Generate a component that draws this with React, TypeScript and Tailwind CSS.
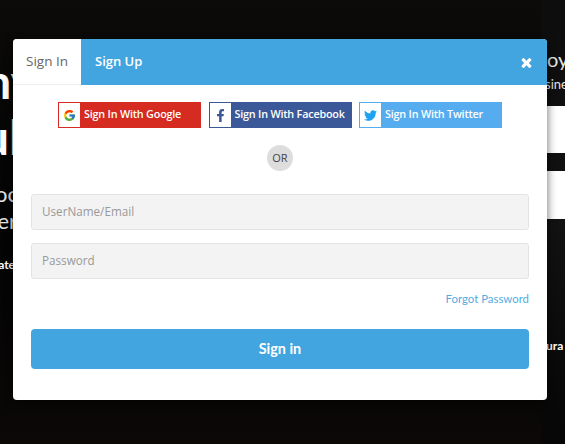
import React from "react";
import { FcGoogle } from "react-icons/fc";
import { FaFacebookF, FaTwitter } from "react-icons/fa";

function CloseIcon() {
  return (
    <svg viewBox="0 0 1792 1792" className="size-[15px]" fill="currentColor">
      <path d="M1490 1322q0 40-28 68l-136 136q-28 28-68 28t-68-28l-294-294-294 294q-28 28-68 28t-68-28l-136-136q-28-28-28-68t28-68l294-294-294-294q-28-28-28-68t28-68l136-136q28-28 68-28t68 28l294 294 294-294q28-28 68-28t68 28l136 136q28 28 28 68t-28 68l-294 294 294 294q28 28 28 68z" />
    </svg>
  );
}

function SocialButton({ color, icon, label }: { color: string; icon: React.ReactNode; label: string }) {
  return (
    <button className={`flex h-[26px] w-[143px] items-center border ${color}`}>
      <span className="flex h-full w-[21px] shrink-0 items-center justify-center bg-white">{icon}</span>
      <span className="whitespace-nowrap pb-px pl-[4px] text-[10.8px] leading-none font-semibold tracking-[-0.2px] text-white">{label}</span>
    </button>
  );
}

function Backdrop() {
  return (
    <div className="flex h-full justify-between bg-linear-to-b from-[#0c0b0a] via-[#040404] to-[#0b0807] text-[#e4e4e4]">
      <div className="flex w-[20px] flex-col items-end pt-[53px] font-['Lato',sans-serif]">
        <div className="-mr-[16px] text-[48px] leading-[56px] font-bold text-white">ny</div>
        <div className="-mr-[1px] text-[48px] leading-[56px] font-bold text-white">ul</div>
        <div className="mt-[15px] mr-[2px] text-[22px] leading-[27px]">oc</div>
        <div className="mr-[3px] text-[22px] leading-[27px]">er</div>
        <div className="mt-[20px] mr-[5px] text-[12px] leading-[22px] font-bold text-white">ate</div>
      </div>
      <div className="flex w-[24px] flex-col bg-linear-to-b from-[#0d0d0d] via-[#121212] to-[#060606] pt-[44px] font-['Lato',sans-serif]">
        <div className="pl-[6px] text-[20px] leading-[30px]">oy</div>
        <div className="pl-[4px] text-[13px] leading-[20px]">sine</div>
        <div className="mt-[12px] h-[47px] bg-white" />
        <div className="mt-[18px] h-[48px] bg-white" />
        <div className="mt-[117px] pl-[5px] text-[12px] leading-[20px] font-bold text-white">ura</div>
      </div>
    </div>
  );
}

export default function App() {
  return (
    <div className="relative h-[444px] w-[565px] overflow-hidden bg-black font-['Open_Sans',sans-serif]">
      <Backdrop />
      <div className="absolute top-[39px] left-[13px] flex h-[361px] w-[534px] flex-col overflow-hidden rounded-[4px] bg-white shadow-[0_3px_10px_rgba(0,0,0,0.6)]">
        <header className="flex h-[46px] shrink-0 items-stretch bg-[#42a5e0] text-[13.5px]">
          <button className="w-[68px] border-b border-[#eeeeee] bg-white text-[#666666]">Sign In</button>
          <button className="px-[14px] text-[13px] font-semibold text-white">Sign Up</button>
          <button className="mr-[13px] ml-auto text-white" aria-label="Close">
            <CloseIcon />
          </button>
        </header>
        <main className="flex flex-col px-[18px] pt-[17px]">
          <div className="flex justify-center gap-[7.5px]">
            <SocialButton color="border-[#d52b20] bg-[#d52b20]" label="Sign In With Google" icon={<FcGoogle className="size-[13px]" />} />
            <SocialButton color="border-[#3b5998] bg-[#3b5998]" label="Sign In With Facebook" icon={<FaFacebookF className="size-[13px] text-[#3b5998]" />} />
            <SocialButton color="border-[#55acee] bg-[#55acee]" label="Sign In With Twitter" icon={<FaTwitter className="size-[13px] text-[#1da1f2]" />} />
          </div>
          <div className="mt-[17px] flex size-[26px] items-center justify-center self-center rounded-full bg-[#dddddd] text-[11px] text-[#444444]">
            OR
          </div>
          <input
            className="mt-[23px] h-[36px] rounded-[3px] border border-[#e3e3e3] bg-[#f3f3f3] px-[10px] pb-[2px] text-[11.7px] placeholder:text-[#999999]"
            placeholder="UserName/Email"
          />
          <input
            className="mt-[13px] h-[36px] rounded-[3px] border border-[#e3e3e3] bg-[#f3f3f3] px-[10px] pb-[2px] text-[11.7px] placeholder:text-[#999999]"
            placeholder="Password"
            type="password"
          />
          <a className="mt-[12px] self-end font-['Lato',sans-serif] text-[11.4px] leading-[16px] text-[#55abdf]">Forgot Password</a>
          <button className="mt-[22px] h-[40px] rounded-[4px] bg-[#42a5e0] font-['Lato',sans-serif] text-[14.4px] font-bold text-white">
            Sign in
          </button>
        </main>
      </div>
    </div>
  );
}
